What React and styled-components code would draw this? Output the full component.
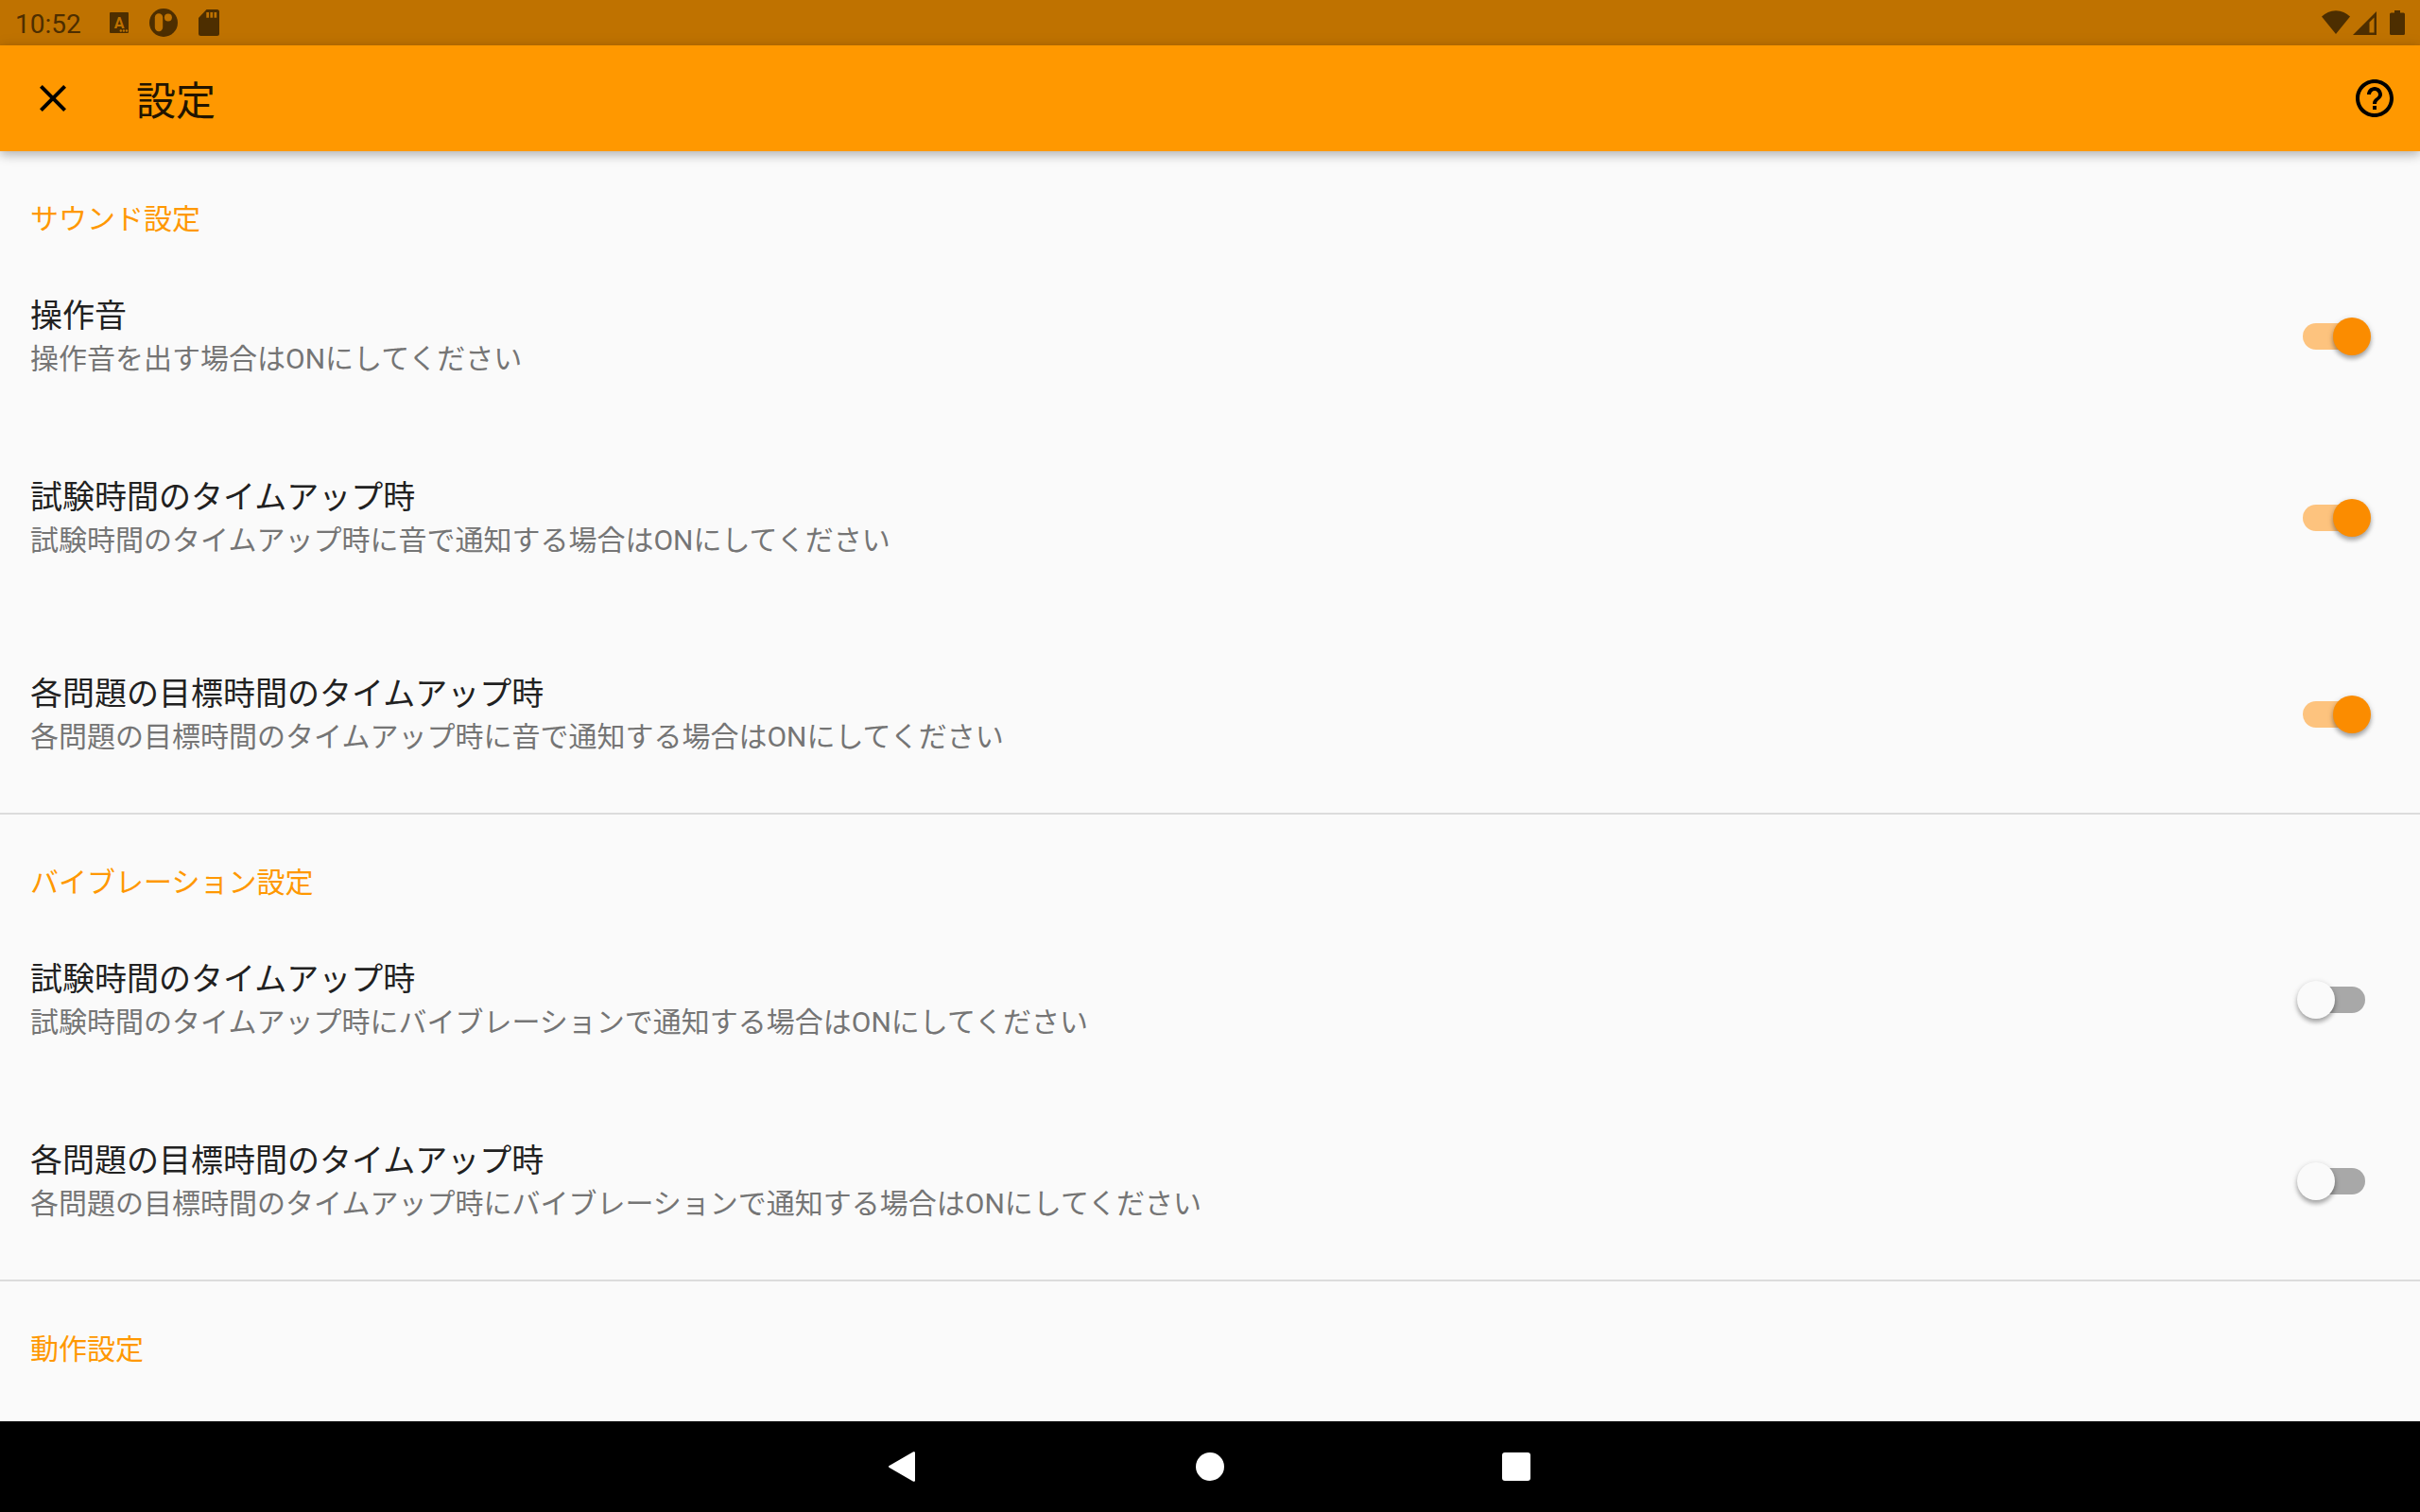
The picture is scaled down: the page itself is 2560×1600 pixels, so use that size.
import styled, { createGlobalStyle } from "styled-components";

const orange = "#ff9800";
const statusBg = "#bf7200";
const statusInk = "#4d2e00";

const GlobalStyle = createGlobalStyle`
  * {
    box-sizing: border-box;
  }

  body {
    margin: 0;
    background: #fafafa;
    color: #212121;
    font-family: Roboto, "Noto Sans CJK JP", sans-serif;
  }
`;

const Screen = styled.div`
  display: flex;
  flex-direction: column;
  height: 100vh;
`;

const StatusBar = styled.div`
  display: flex;
  align-items: center;
  justify-content: space-between;
  flex: none;
  height: 48px;
  padding: 0 16px;
  background: ${statusBg};
  color: ${statusInk};

  svg {
    display: block;
    fill: currentColor;
  }
`;

const StatusGroup = styled.div`
  display: flex;
  align-items: center;
  gap: ${({ $gap }) => $gap}px;
`;

const Clock = styled.time`
  margin-right: 8px;
  padding-top: 4px;
  font-size: 28px;
  line-height: 36px;
`;

const AppBar = styled.header`
  display: flex;
  align-items: center;
  flex: none;
  height: 112px;
  padding: 0 8px 0 16px;
  background: ${orange};
  box-shadow: 0 4px 10px rgba(0, 0, 0, 0.22), 0 2px 16px rgba(0, 0, 0, 0.1);
  z-index: 1;

  h1 {
    flex: 1;
    margin: 0 0 0 48px;
    padding-top: 8px;
    color: #211400;
    font-size: 42px;
    font-weight: 400;
    line-height: 56px;
  }
`;

const IconButton = styled.button`
  display: flex;
  align-items: center;
  justify-content: center;
  width: 80px;
  height: 80px;
  padding: 0;
  border: none;
  background: none;
  color: #000;

  svg {
    width: 48px;
    height: 48px;
    fill: currentColor;
  }
`;

const Content = styled.main`
  flex: 1;
  min-height: 0;
  overflow: hidden;
`;

const Section = styled.section`
  & + & {
    margin-top: 8px;
    border-top: 2px solid #dcdcdc;
  }

  h2 {
    margin: 0;
    padding: 52px 32px 8px;
    color: ${orange};
    font-size: 30px;
    font-weight: 400;
    line-height: 40px;
  }
`;

const Row = styled.label`
  display: flex;
  align-items: center;
  justify-content: space-between;
  height: 192px;
  margin-top: ${({ $spaced }) => ($spaced ? 16 : 0)}px;
  padding: 0 58px 0 32px;
`;

const RowText = styled.span`
  display: flex;
  flex-direction: column;
`;

const RowTitle = styled.span`
  font-size: 34px;
  line-height: 48px;
`;

const RowNote = styled.span`
  color: #757575;
  font-size: 30px;
  line-height: 44px;
`;

const Switch = styled.input`
  appearance: none;
  position: relative;
  width: 66px;
  height: 28px;
  margin: 0;
  border-radius: 14px;
  background: #a8a8a8;

  &::before {
    content: "";
    position: absolute;
    top: -6px;
    left: -6px;
    width: 40px;
    height: 40px;
    border-radius: 50%;
    background: #fafafa;
    box-shadow: 0 4px 4px rgba(0, 0, 0, 0.2), 0 2px 6px rgba(0, 0, 0, 0.22);
  }

  &:checked {
    background: #fdc37e;
  }

  &:checked::before {
    left: 32px;
    background: #fb8c00;
  }
`;

const NavBar = styled.nav`
  display: flex;
  align-items: center;
  justify-content: center;
  flex: none;
  height: 96px;
  background: #000;
`;

const NavButton = styled.button`
  display: flex;
  align-items: center;
  justify-content: center;
  width: 324px;
  height: 96px;
  padding: 0;
  border: none;
  background: none;

  svg {
    fill: #fff;
  }
`;

const sections = [
  {
    title: "サウンド設定",
    rows: [
      {
        title: "操作音",
        note: "操作音を出す場合はONにしてください",
        on: true,
      },
      {
        title: "試験時間のタイムアップ時",
        note: "試験時間のタイムアップ時に音で通知する場合はONにしてください",
        on: true,
      },
      {
        title: "各問題の目標時間のタイムアップ時",
        note: "各問題の目標時間のタイムアップ時に音で通知する場合はONにしてください",
        on: true,
        spaced: true,
      },
    ],
  },
  {
    title: "バイブレーション設定",
    rows: [
      {
        title: "試験時間のタイムアップ時",
        note: "試験時間のタイムアップ時にバイブレーションで通知する場合はONにしてください",
        on: false,
      },
      {
        title: "各問題の目標時間のタイムアップ時",
        note: "各問題の目標時間のタイムアップ時にバイブレーションで通知する場合はONにしてください",
        on: false,
      },
    ],
  },
  { title: "動作設定", rows: [] },
];

function KeyboardIcon() {
  return (
    <svg width="20" height="22" viewBox="0 0 20 22" aria-hidden="true">
      <rect width="20" height="22" rx="1" />
      <g fill={statusBg}>
        <text x="10" y="17" textAnchor="middle" fontSize="16" fontWeight="700">
          A
        </text>
        <circle cx="11.800" cy="19.500" r="1.200" />
        <circle cx="14.900" cy="19.500" r="1.200" />
        <circle cx="18" cy="19.500" r="1.200" />
      </g>
    </svg>
  );
}

function PillIcon() {
  return (
    <svg width="30" height="30" viewBox="0 0 30 30" aria-hidden="true">
      <circle cx="15" cy="15" r="15" />
      <rect x="5.800" y="5.300" width="8.400" height="19" rx="4.200" fill={statusBg} />
      <circle cx="19.900" cy="9.600" r="4" fill={statusBg} />
    </svg>
  );
}

function SdCardIcon() {
  return (
    <svg width="22" height="28" viewBox="0 0 22 28" aria-hidden="true">
      <path d="M8.500 0H19.500A2.500 2.500 0 0 1 22 2.500v23a2.500 2.500 0 0 1-2.500 2.500h-17A2.500 2.500 0 0 1 0 25.500V9z" />
      <path fill={statusBg} d="M8.300 3h2.700v5.700H8.300zM12.400 3h2.700v5.700h-2.700zM16.500 3h2.700v5.700h-2.700z" />
    </svg>
  );
}

function SystemStatus() {
  return (
    <StatusBar>
      <StatusGroup $gap={22}>
        <Clock>10:52</Clock>
        <KeyboardIcon />
        <PillIcon />
        <SdCardIcon />
      </StatusGroup>
      <StatusGroup $gap={14}>
        <StatusGroup $gap={3}>
          <svg width="30" height="26" viewBox="0 0 30 26" aria-hidden="true">
            <path d="M15 25 0 6.500C4 2.700 9 .3 15 .3s11 2.400 15 6.200z" />
          </svg>
          <svg width="25" height="26" viewBox="0 0 25 26" aria-hidden="true">
            <path fillRule="evenodd" d="M25 1v25H0zM22.500 7.500 17.500 12.500v11h5z" />
          </svg>
        </StatusGroup>
        <svg width="16" height="26" viewBox="0 0 16 26" aria-hidden="true">
          <path d="M5 0h6v2.500h3.500A1.500 1.500 0 0 1 16 4v20.500a1.500 1.500 0 0 1-1.500 1.500h-13A1.500 1.500 0 0 1 0 24.500V4a1.500 1.500 0 0 1 1.500-1.500H5z" />
        </svg>
      </StatusGroup>
    </StatusBar>
  );
}

export default function App() {
  return (
    <Screen>
      <GlobalStyle />
      <SystemStatus />
      <AppBar>
        <IconButton aria-label="閉じる">
          <svg viewBox="0 0 24 24">
            <path d="M19 6.410 17.590 5 12 10.590 6.410 5 5 6.410 10.590 12 5 17.590 6.410 19 12 13.410 17.590 19 19 17.590 13.410 12z" />
          </svg>
        </IconButton>
        <h1>設定</h1>
        <IconButton aria-label="ヘルプ">
          <svg viewBox="0 0 24 24">
            <path d="M11 18h2v-2h-2v2zm1-16C6.480 2 2 6.480 2 12s4.480 10 10 10 10-4.480 10-10S17.520 2 12 2zm0 18c-4.410 0-8-3.590-8-8s3.590-8 8-8 8 3.590 8 8-3.590 8-8 8zm0-14c-2.210 0-4 1.790-4 4h2c0-1.100.9-2 2-2s2 .9 2 2c0 2-3 1.750-3 5h2c0-2.250 3-2.500 3-5 0-2.210-1.790-4-4-4z" />
          </svg>
        </IconButton>
      </AppBar>
      <Content>
        {sections.map((section) => (
          <Section key={section.title}>
            <h2>{section.title}</h2>
            {section.rows.map((row) => (
              <Row key={row.title} $spaced={row.spaced}>
                <RowText>
                  <RowTitle>{row.title}</RowTitle>
                  <RowNote>{row.note}</RowNote>
                </RowText>
                <Switch type="checkbox" defaultChecked={row.on} />
              </Row>
            ))}
          </Section>
        ))}
      </Content>
      <NavBar>
        <NavButton aria-label="戻る">
          <svg width="32" height="32" viewBox="0 0 32 32">
            <path d="M26.200.3A1.200 1.200 0 0 1 28 1.300v29.400a1.200 1.200 0 0 1-1.800 1L.7 17a1.200 1.200 0 0 1 0-2z" />
          </svg>
        </NavButton>
        <NavButton aria-label="ホーム">
          <svg width="30" height="30" viewBox="0 0 30 30">
            <circle cx="15" cy="15" r="15" />
          </svg>
        </NavButton>
        <NavButton aria-label="履歴">
          <svg width="30" height="30" viewBox="0 0 30 30">
            <rect width="30" height="30" rx="3" />
          </svg>
        </NavButton>
      </NavBar>
    </Screen>
  );
}
